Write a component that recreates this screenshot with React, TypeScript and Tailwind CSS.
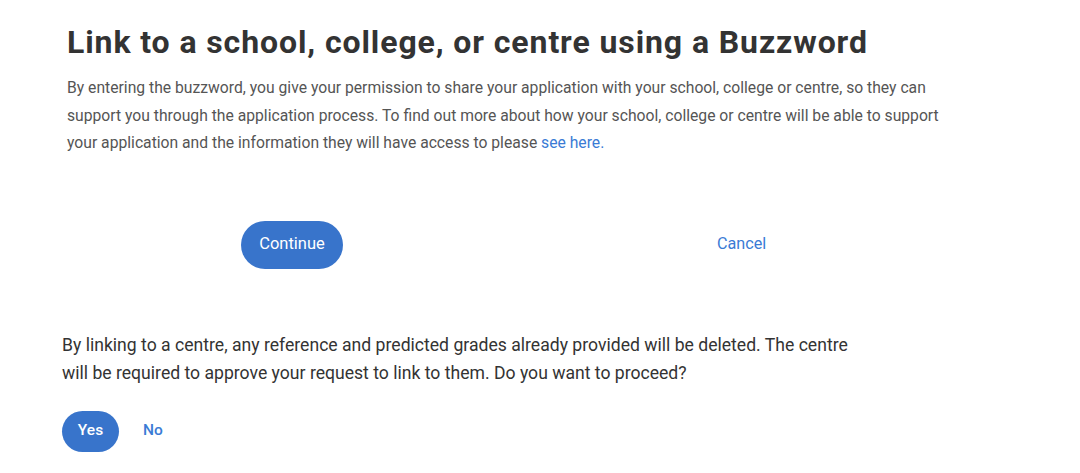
import React from "react";

export default function App() {
  return (
    <div className="w-[1080px] h-[473px] bg-white overflow-hidden" style={{ fontFamily: "Roboto, 'Liberation Sans', sans-serif" }}>
      <div className="pl-[67px] pt-[22px]">
        <h1 className="text-[32px] leading-[40px] font-bold text-[#333333] tracking-[0.9px]">
          Link to a school, college, or centre using a Buzzword
        </h1>
        <p className="mt-[12px] w-[890px] text-[15.7px] leading-[27.5px] text-[#555555]">
          By entering the buzzword, you give your permission to share your application with your school, college or centre, so they can support you through the application process. To find out more about how your school, college or centre will be able to support your application and the information they will have access to please{" "}
          <a className="text-[#3a7bd5]">see here.</a>
        </p>
      </div>
      <div className="flex items-center mt-[64px] pl-[241px]">
        <button className="w-[102px] h-[48px] rounded-full bg-[#3874cb] text-white text-[16.5px]">
          Continue
        </button>
        <a className="ml-[374px] text-[16.2px] text-[#3a7bd5]">Cancel</a>
      </div>
      <div className="pl-[62px] mt-[62px]">
        <p className="w-[805px] text-[17.6px] leading-[28px] text-[#333333]">
          By linking to a centre, any reference and predicted grades already provided will be deleted. The centre will be required to approve your request to link to them. Do you want to proceed?
        </p>
        <div className="flex items-center mt-[24px]">
          <button className="w-[57px] h-[41px] rounded-full bg-[#3874cb] text-white text-[15.5px] font-medium">
            Yes
          </button>
          <a className="ml-[24px] text-[15.5px] font-medium text-[#3a7bd5]">No</a>
        </div>
      </div>
    </div>
  );
}
